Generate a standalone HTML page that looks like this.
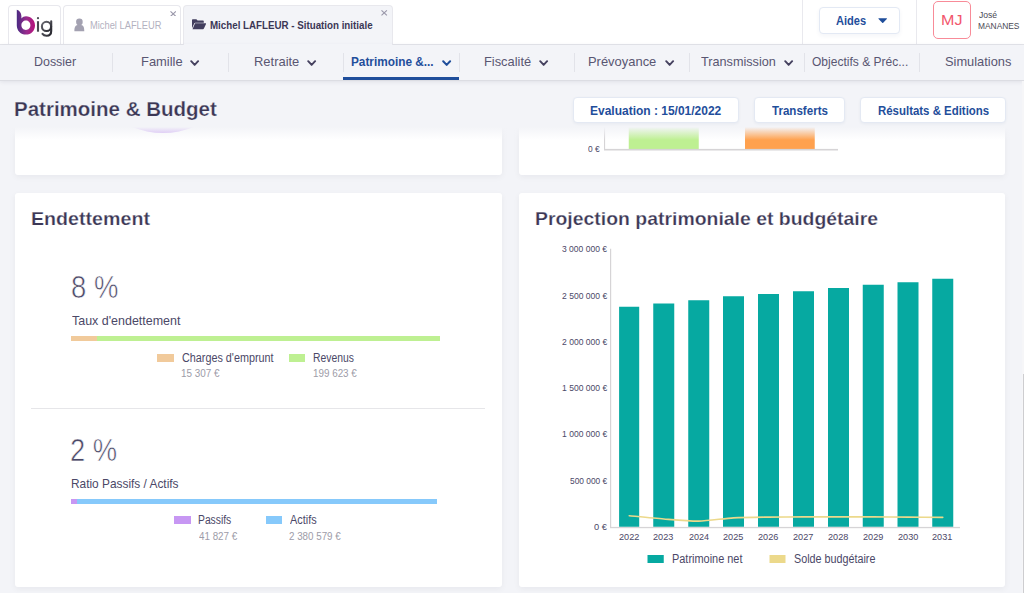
<!DOCTYPE html>
<html lang="fr"><head><meta charset="utf-8"><title>Patrimoine &amp; Budget</title>
<style>
html,body{margin:0;padding:0}
body{width:1024px;height:593px;overflow:hidden;position:relative;background:#f3f4f8;font-family:"Liberation Sans",sans-serif}
.abs{position:absolute}
.t{position:absolute;white-space:pre;line-height:1;transform-origin:0 0;display:block}
.card{position:absolute;background:#fff;border-radius:3px;box-shadow:0 2px 6px rgba(20,20,40,0.05)}
.btn{position:absolute;background:#fff;border:1px solid #e4e9f3;border-radius:4px;box-sizing:border-box;box-shadow:0 1px 3px rgba(40,60,120,0.06)}
.tab{position:absolute;top:5px;height:39px;box-sizing:border-box;border:1px solid #e8e8ed;border-bottom:none;border-radius:4px 4px 0 0;background:#fff}
</style></head><body>

<!-- cards (scrolling content) -->
<div class="card" style="left:15px;top:100px;width:486.5px;height:75px"></div>
<div class="card" style="left:519px;top:100px;width:486px;height:75px"></div>
<div class="card" style="left:15px;top:192.5px;width:486.5px;height:394px"></div>
<div class="card" style="left:519px;top:192.5px;width:486px;height:394px"></div>

<!-- top-left card remnants -->
<div class="abs" style="left:15px;top:100px;width:486.5px;height:75px;overflow:hidden"><div class="abs" style="left:66px;top:-131.3px;width:164px;height:164px;border-radius:50%;background:#c9a3f3"></div></div>
<!-- top-right card remnants: mini chart -->
<svg class="abs" style="left:519px;top:100px" width="486" height="75" viewBox="519 100 486 75">
<rect x="628.75" y="100" width="70" height="49" fill="#bef092"/>
<rect x="745" y="100" width="69.75" height="49" fill="#ffa14e"/>
<rect x="604" y="100" width="1.1" height="50" fill="#d6d4d6"/>
<rect x="604" y="148.9" width="234" height="1.6" fill="#d6d4d6"/>
</svg>

<!-- sticky header fade -->
<div class="abs" style="left:0;top:81px;width:1024px;height:45.5px;background:#f3f4f8"></div>
<div class="abs" style="left:0;top:126.5px;width:1024px;height:13px;background:linear-gradient(to bottom,#f3f4f8 0%,rgba(243,244,248,0) 100%)"></div>

<!-- left card content -->
<div class="abs" style="left:70.75px;top:336.25px;width:369.25px;height:5px;background:#bef092"></div>
<div class="abs" style="left:70.75px;top:336.25px;width:26.5px;height:5px;background:#f1ca9b"></div>
<div class="abs" style="left:157.4px;top:354.25px;width:16.4px;height:7.5px;background:#f1ca9b"></div>
<div class="abs" style="left:289.25px;top:354.25px;width:16px;height:7.5px;background:#bef092"></div>
<div class="abs" style="left:31px;top:408px;width:453.5px;height:1px;background:#e6e6e9"></div>
<div class="abs" style="left:70.75px;top:498.75px;width:366px;height:5px;background:#86c9fb"></div>
<div class="abs" style="left:70.75px;top:498.75px;width:6.3px;height:5px;background:#c797f3"></div>
<div class="abs" style="left:174px;top:516.25px;width:16.5px;height:8px;background:#c797f3"></div>
<div class="abs" style="left:265.5px;top:516.25px;width:16px;height:8px;background:#86c9fb"></div>

<!-- right card chart -->
<svg class="abs" style="left:519px;top:192px" width="486" height="395" viewBox="519 192 486 395">
<rect x="619.1" y="306.75" width="20.1" height="220.05" fill="#06a9a1"/><rect x="653.25" y="303.5" width="21" height="223.30" fill="#06a9a1"/><rect x="688.25" y="300.25" width="21" height="226.55" fill="#06a9a1"/><rect x="723.0" y="296.25" width="21" height="230.55" fill="#06a9a1"/><rect x="758.0" y="294" width="21" height="232.80" fill="#06a9a1"/><rect x="793.0" y="291.25" width="21" height="235.55" fill="#06a9a1"/><rect x="828.0" y="288" width="21" height="238.80" fill="#06a9a1"/><rect x="862.75" y="284.75" width="21" height="242.05" fill="#06a9a1"/><rect x="897.5" y="282.25" width="21" height="244.55" fill="#06a9a1"/><rect x="932.25" y="278.75" width="21" height="248.05" fill="#06a9a1"/>
<rect x="610" y="248.75" width="1.2" height="279" fill="#d6d4d6"/>
<rect x="610" y="526.9" width="350" height="1.3" fill="#d6d4d6"/>
<path d="M629.25,515.70 C633.56,516.11 655.06,518.33 663.75,519.00 C672.44,519.67 690.02,521.24 698.75,521.10 C707.48,520.96 724.88,518.40 733.60,517.90 C742.32,517.40 759.76,517.23 768.50,517.10 C777.24,516.98 794.75,516.92 803.50,516.90 C812.25,516.88 829.76,516.90 838.50,516.90 C847.24,516.90 864.70,516.88 873.40,516.90 C882.10,516.92 899.43,517.04 908.10,517.10 C916.77,517.16 938.42,517.36 942.75,517.40" fill="none" stroke="#ecd98b" stroke-width="1.6" stroke-linecap="round"/>
<rect x="647.5" y="555" width="16.25" height="8" fill="#06a9a1"/>
<rect x="769.5" y="555" width="16" height="8" fill="#ecd98b"/>
</svg>

<!-- top bar -->
<div class="abs" style="left:0;top:0;width:1024px;height:44px;background:#fff;border-bottom:1px solid #e4e5ea"></div>
<div class="abs" style="left:802px;top:0;width:1px;height:44px;background:#e9e9ee"></div>
<div class="abs" style="left:916px;top:0;width:1px;height:44px;background:#e9e9ee"></div>
<div class="tab" style="left:8px;width:53px"></div>
<div class="tab" style="left:63px;width:118px"></div>
<div class="tab" style="left:183px;width:209.5px;background:#f3f4f8;height:41px"></div>
<!-- logo -->
<svg class="abs" style="left:14px;top:8px" width="42" height="30" viewBox="14 8 42 30">
<defs><linearGradient id="lg" x1="0" y1="0" x2="1" y2="0"><stop offset="0" stop-color="#4a2a82"/><stop offset="0.55" stop-color="#9a2c8e"/><stop offset="1" stop-color="#b8107a"/></linearGradient>
<linearGradient id="lg2" x1="0" y1="0" x2="1" y2="1"><stop offset="0" stop-color="#6a6a72"/><stop offset="1" stop-color="#24242b"/></linearGradient></defs>
<path d="M16.8,9.8 C19.5,10.6 21.2,12.6 21.4,16 L21.4,18.4 C22.6,17 24.2,16.3 26,16.3 C31,16.3 35,20.3 35,25.4 C35,30.5 31,34.6 26,34.6 C20.8,34.6 16.8,30.5 16.8,25.4 Z M25.9,20.6 C23.4,20.6 21.4,22.7 21.4,25.3 C21.4,27.9 23.4,30 25.9,30 C28.4,30 30.4,27.9 30.4,25.3 C30.4,22.7 28.4,20.6 25.9,20.6 Z" fill="url(#lg)" fill-rule="evenodd"/>
<circle cx="38" cy="18.2" r="1.1" fill="#4a4a52"/>
<rect x="36.95" y="21.2" width="2.1" height="10.5" fill="#4a4a52"/>
<path d="M51.2,21.2 L51.2,31 C51.2,34 49.3,35.7 46.6,35.7 C44.7,35.7 43.3,35 42.5,33.8" fill="none" stroke="url(#lg2)" stroke-width="2.1" stroke-linecap="round"/>
<circle cx="46.5" cy="26.4" r="4.6" fill="none" stroke="url(#lg2)" stroke-width="2.1"/>
</svg>
<!-- person icon -->
<svg class="abs" style="left:74px;top:17.5px" width="11" height="14" viewBox="0 0 11 14"><circle cx="5.4" cy="3.9" r="3.3" fill="#a3a1b1"/><path d="M3.6,5.5 L7.2,5.5 L7.2,7 C9.4,7.3 10.3,9 10.3,13.3 L0.4,13.3 C0.4,9 1.4,7.3 3.6,7 Z" fill="#a3a1b1"/></svg>
<!-- folder icon -->
<svg class="abs" style="left:191.6px;top:19.2px" width="14.5" height="10.4" viewBox="0 0 14.5 10"><path d="M0,1 C0,0.4 0.4,0 1,0 L4.4,0 L5.6,1.3 L10.8,1.3 C11.4,1.3 11.8,1.7 11.8,2.3 L11.8,3.5 L3.4,3.5 C2.8,3.5 2.4,3.8 2.2,4.3 L0,9 Z" fill="#423e5e"/><path d="M3.1,4.1 L14.3,4.1 L11.9,9.4 C11.7,9.8 11.4,10 11,10 L0.5,10 Z" fill="#423e5e"/></svg>
<!-- close x -->
<svg class="abs" style="left:169.8px;top:10.6px" width="6.4" height="5.8" viewBox="0 0 6.4 5.8"><path d="M0.5,0.4 L5.9,5.4 M5.9,0.4 L0.5,5.4" stroke="#9a98aa" stroke-width="1.15" fill="none"/></svg>
<svg class="abs" style="left:381.4px;top:10.4px" width="6.4" height="5.8" viewBox="0 0 6.4 5.8"><path d="M0.5,0.4 L5.9,5.4 M5.9,0.4 L0.5,5.4" stroke="#9a98aa" stroke-width="1.15" fill="none"/></svg>
<!-- Aides button -->
<div class="btn" style="left:819px;top:7px;width:81px;height:26.5px;border-color:#e3e9f4;box-shadow:0 2px 4px rgba(40,60,120,0.05)"></div>
<svg class="abs" style="left:877.9px;top:17.9px" width="9.4" height="5.2" viewBox="0 0 9.4 5.2"><path d="M0.8,0.3 L8.6,0.3 Q9.3,0.4 8.8,1 L5.2,4.7 Q4.7,5.1 4.2,4.7 L0.6,1 Q0.1,0.4 0.8,0.3 Z" fill="#1f4e9b"/></svg>
<!-- avatar -->
<div class="abs" style="left:933px;top:1px;width:38px;height:38px;box-sizing:border-box;border:1px solid #f88b98;border-radius:5px;background:#fff"></div>

<!-- nav bar -->
<div class="abs" style="left:0;top:45px;width:1024px;height:35px;background:#f3f4f8;border-bottom:1px solid #dcdde3;box-shadow:0 1px 4px rgba(60,60,90,0.10)"></div>
<div class="abs" style="left:183.5px;top:44px;width:208.5px;height:2px;background:#f3f4f8"></div>
<div class="abs" style="left:112px;top:53px;width:1px;height:19px;background:#e2e3e9"></div><div class="abs" style="left:228px;top:53px;width:1px;height:19px;background:#e2e3e9"></div><div class="abs" style="left:343px;top:53px;width:1px;height:19px;background:#e2e3e9"></div><div class="abs" style="left:459px;top:53px;width:1px;height:19px;background:#e2e3e9"></div><div class="abs" style="left:574px;top:53px;width:1px;height:19px;background:#e2e3e9"></div><div class="abs" style="left:689px;top:53px;width:1px;height:19px;background:#e2e3e9"></div><div class="abs" style="left:804px;top:53px;width:1px;height:19px;background:#e2e3e9"></div><div class="abs" style="left:919px;top:53px;width:1px;height:19px;background:#e2e3e9"></div>
<div class="abs" style="left:343.4px;top:77px;width:115.9px;height:3.2px;background:#1f4e9b"></div>
<svg class="abs" style="left:190px;top:59.8px" width="10" height="7" viewBox="0 0 10 7"><path d="M1.2 1.2 L4.65 4.9 L8.1 1.2" fill="none" stroke="#45415f" stroke-width="1.9" stroke-linecap="round" stroke-linejoin="round"/></svg><svg class="abs" style="left:307px;top:59.8px" width="10" height="7" viewBox="0 0 10 7"><path d="M1.2 1.2 L4.65 4.9 L8.1 1.2" fill="none" stroke="#45415f" stroke-width="1.9" stroke-linecap="round" stroke-linejoin="round"/></svg><svg class="abs" style="left:539px;top:59.8px" width="10" height="7" viewBox="0 0 10 7"><path d="M1.2 1.2 L4.65 4.9 L8.1 1.2" fill="none" stroke="#45415f" stroke-width="1.9" stroke-linecap="round" stroke-linejoin="round"/></svg><svg class="abs" style="left:665px;top:59.8px" width="10" height="7" viewBox="0 0 10 7"><path d="M1.2 1.2 L4.65 4.9 L8.1 1.2" fill="none" stroke="#45415f" stroke-width="1.9" stroke-linecap="round" stroke-linejoin="round"/></svg><svg class="abs" style="left:784px;top:59.8px" width="10" height="7" viewBox="0 0 10 7"><path d="M1.2 1.2 L4.65 4.9 L8.1 1.2" fill="none" stroke="#45415f" stroke-width="1.9" stroke-linecap="round" stroke-linejoin="round"/></svg><svg class="abs" style="left:441.8px;top:59.8px" width="10" height="7" viewBox="0 0 10 7"><path d="M1.2 1.2 L4.65 4.9 L8.1 1.2" fill="none" stroke="#1f4e9b" stroke-width="2" stroke-linecap="round" stroke-linejoin="round"/></svg>

<!-- header buttons -->
<div class="btn" style="left:573px;top:96.7px;width:165.5px;height:26px"></div>
<div class="btn" style="left:754px;top:96.7px;width:91.25px;height:26px"></div>
<div class="btn" style="left:860.25px;top:96.7px;width:145.75px;height:26px"></div>

<!-- scrollbar thumb -->
<div class="abs" style="left:1022px;top:81px;width:2px;height:512px;background:#f6f6f8"></div>
<div class="abs" style="left:1022.8px;top:374px;width:1.2px;height:219px;background:#cdcdd0"></div>

<span class="t" style="left:33.99px;top:55px;font-size:13px;font-weight:400;color:#595672;transform:scaleX(0.9558);">Dossier</span>
<span class="t" style="left:140.70px;top:55px;font-size:13px;font-weight:400;color:#595672;transform:scaleX(0.9935);">Famille</span>
<span class="t" style="left:253.95px;top:55px;font-size:13px;font-weight:400;color:#595672;transform:scaleX(0.9955);">Retraite</span>
<span class="t" style="left:351.03px;top:55px;font-size:13px;font-weight:700;color:#1f4e9b;transform:scaleX(0.9081);">Patrimoine &amp;...</span>
<span class="t" style="left:483.71px;top:55px;font-size:13px;font-weight:400;color:#595672;transform:scaleX(0.9880);">Fiscalité</span>
<span class="t" style="left:588.20px;top:55px;font-size:13px;font-weight:400;color:#595672;transform:scaleX(0.9947);">Prévoyance</span>
<span class="t" style="left:700.94px;top:55px;font-size:13px;font-weight:400;color:#595672;transform:scaleX(0.9737);">Transmission</span>
<span class="t" style="left:812.21px;top:55px;font-size:13px;font-weight:400;color:#595672;transform:scaleX(0.9251);">Objectifs &amp; Préc...</span>
<span class="t" style="left:944.88px;top:55px;font-size:13px;font-weight:400;color:#595672;transform:scaleX(0.9877);">Simulations</span>
<span class="t" style="left:90.06px;top:21px;font-size:10px;font-weight:400;color:#b3b1c0;transform:scaleX(0.9321);">Michel LAFLEUR</span>
<span class="t" style="left:210.09px;top:21px;font-size:10px;font-weight:700;color:#3b3755;transform:scaleX(0.9753);">Michel LAFLEUR - Situation initiale</span>
<span class="t" style="left:836.18px;top:14px;font-size:13px;font-weight:700;color:#1f4e9b;transform:scaleX(0.8521);">Aides</span>
<span class="t" style="left:941.29px;top:12px;font-size:15px;font-weight:400;color:#f2566c;transform:scaleX(1.0719);">MJ</span>
<span class="t" style="left:978.56px;top:10px;font-size:9.5px;font-weight:400;color:#4a4a55;transform:scaleX(0.9038);">José</span>
<span class="t" style="left:978.10px;top:21px;font-size:9.5px;font-weight:400;color:#4a4a55;transform:scaleX(0.8823);">MANANES</span>
<span class="t" style="left:13.65px;top:99px;font-size:20px;font-weight:700;color:#3b3755;transform:scaleX(1.0251);-webkit-text-stroke:0.25px #f3f4f8;">Patrimoine &amp; Budget</span>
<span class="t" style="left:589.74px;top:105px;font-size:12.5px;font-weight:700;color:#1f4e9b;transform:scaleX(0.9592);">Evaluation : 15/01/2022</span>
<span class="t" style="left:771.75px;top:105px;font-size:12.5px;font-weight:700;color:#1f4e9b;transform:scaleX(0.9250);">Transferts</span>
<span class="t" style="left:877.78px;top:105px;font-size:12.5px;font-weight:700;color:#1f4e9b;transform:scaleX(0.9147);">Résultats &amp; Editions</span>
<span class="t" style="left:588.49px;top:145px;font-size:8.5px;font-weight:400;color:#4b4867;transform:scaleX(0.9932);">0 €</span>
<span class="t" style="left:30.64px;top:209px;font-size:19px;font-weight:700;color:#3b3755;transform:scaleX(1.0336);-webkit-text-stroke:0.25px #fff;">Endettement</span>
<span class="t" style="left:70.57px;top:272px;font-size:30.5px;font-weight:400;color:#4b4867;transform:scaleX(0.9003);-webkit-text-stroke:0.6px #fff;">8 %</span>
<span class="t" style="left:71.50px;top:314px;font-size:13px;font-weight:400;color:#4b4867;transform:scaleX(0.9589);">Taux d&#x27;endettement</span>
<span class="t" style="left:181.53px;top:352px;font-size:12px;font-weight:400;color:#4b4867;transform:scaleX(0.9005);">Charges d&#x27;emprunt</span>
<span class="t" style="left:181.22px;top:369px;font-size:10px;font-weight:400;color:#9d9ca8;transform:scaleX(0.9896);">15 307 €</span>
<span class="t" style="left:313.09px;top:352px;font-size:12px;font-weight:400;color:#4b4867;transform:scaleX(0.8631);">Revenus</span>
<span class="t" style="left:313.22px;top:369px;font-size:10px;font-weight:400;color:#9d9ca8;transform:scaleX(0.9843);">199 623 €</span>
<span class="t" style="left:70.39px;top:435px;font-size:30.5px;font-weight:400;color:#4b4867;transform:scaleX(0.8960);-webkit-text-stroke:0.6px #fff;">2 %</span>
<span class="t" style="left:70.84px;top:477px;font-size:13px;font-weight:400;color:#4b4867;transform:scaleX(0.9130);">Ratio Passifs / Actifs</span>
<span class="t" style="left:198.00px;top:514px;font-size:12px;font-weight:400;color:#4b4867;transform:scaleX(0.8590);">Passifs</span>
<span class="t" style="left:198.64px;top:532px;font-size:10px;font-weight:400;color:#9d9ca8;transform:scaleX(0.9812);">41 827 €</span>
<span class="t" style="left:289.50px;top:514px;font-size:12px;font-weight:400;color:#4b4867;transform:scaleX(0.9068);">Actifs</span>
<span class="t" style="left:288.98px;top:532px;font-size:10px;font-weight:400;color:#9d9ca8;transform:scaleX(0.9788);">2 380 579 €</span>
<span class="t" style="left:534.91px;top:209px;font-size:19px;font-weight:700;color:#3b3755;transform:scaleX(1.0219);-webkit-text-stroke:0.25px #fff;">Projection patrimoniale et budgétaire</span>
<span class="t" style="left:594.12px;top:523px;font-size:8.8px;font-weight:400;color:#4b4867;transform:scaleX(1.0556);">0 €</span>
<span class="t" style="left:569.85px;top:477px;font-size:8.8px;font-weight:400;color:#4b4867;transform:scaleX(0.9513);">500 000 €</span>
<span class="t" style="left:561.79px;top:430px;font-size:8.8px;font-weight:400;color:#4b4867;transform:scaleX(0.9740);">1 000 000 €</span>
<span class="t" style="left:561.79px;top:384px;font-size:8.8px;font-weight:400;color:#4b4867;transform:scaleX(0.9740);">1 500 000 €</span>
<span class="t" style="left:561.79px;top:338px;font-size:8.8px;font-weight:400;color:#4b4867;transform:scaleX(0.9740);">2 000 000 €</span>
<span class="t" style="left:561.79px;top:292px;font-size:8.8px;font-weight:400;color:#4b4867;transform:scaleX(0.9740);">2 500 000 €</span>
<span class="t" style="left:562.05px;top:245px;font-size:8.8px;font-weight:400;color:#4b4867;transform:scaleX(0.9685);">3 000 000 €</span>
<span class="t" style="left:618.99px;top:532px;font-size:9.5px;font-weight:400;color:#4b4867;transform:scaleX(0.9623);">2022</span>
<span class="t" style="left:653.49px;top:532px;font-size:9.5px;font-weight:400;color:#4b4867;transform:scaleX(0.9623);">2023</span>
<span class="t" style="left:688.50px;top:532px;font-size:9.5px;font-weight:400;color:#4b4867;transform:scaleX(0.9500);">2024</span>
<span class="t" style="left:723.34px;top:532px;font-size:9.5px;font-weight:400;color:#4b4867;transform:scaleX(0.9623);">2025</span>
<span class="t" style="left:758.24px;top:532px;font-size:9.5px;font-weight:400;color:#4b4867;transform:scaleX(0.9623);">2026</span>
<span class="t" style="left:793.24px;top:532px;font-size:9.5px;font-weight:400;color:#4b4867;transform:scaleX(0.9623);">2027</span>
<span class="t" style="left:828.24px;top:532px;font-size:9.5px;font-weight:400;color:#4b4867;transform:scaleX(0.9623);">2028</span>
<span class="t" style="left:863.14px;top:532px;font-size:9.5px;font-weight:400;color:#4b4867;transform:scaleX(0.9623);">2029</span>
<span class="t" style="left:897.84px;top:532px;font-size:9.5px;font-weight:400;color:#4b4867;transform:scaleX(0.9623);">2030</span>
<span class="t" style="left:932.49px;top:532px;font-size:9.5px;font-weight:400;color:#4b4867;transform:scaleX(0.9623);">2031</span>
<span class="t" style="left:671.54px;top:553px;font-size:12px;font-weight:400;color:#4b4867;transform:scaleX(0.9107);">Patrimoine net</span>
<span class="t" style="left:793.78px;top:553px;font-size:12px;font-weight:400;color:#4b4867;transform:scaleX(0.8971);">Solde budgétaire</span>
</body></html>
